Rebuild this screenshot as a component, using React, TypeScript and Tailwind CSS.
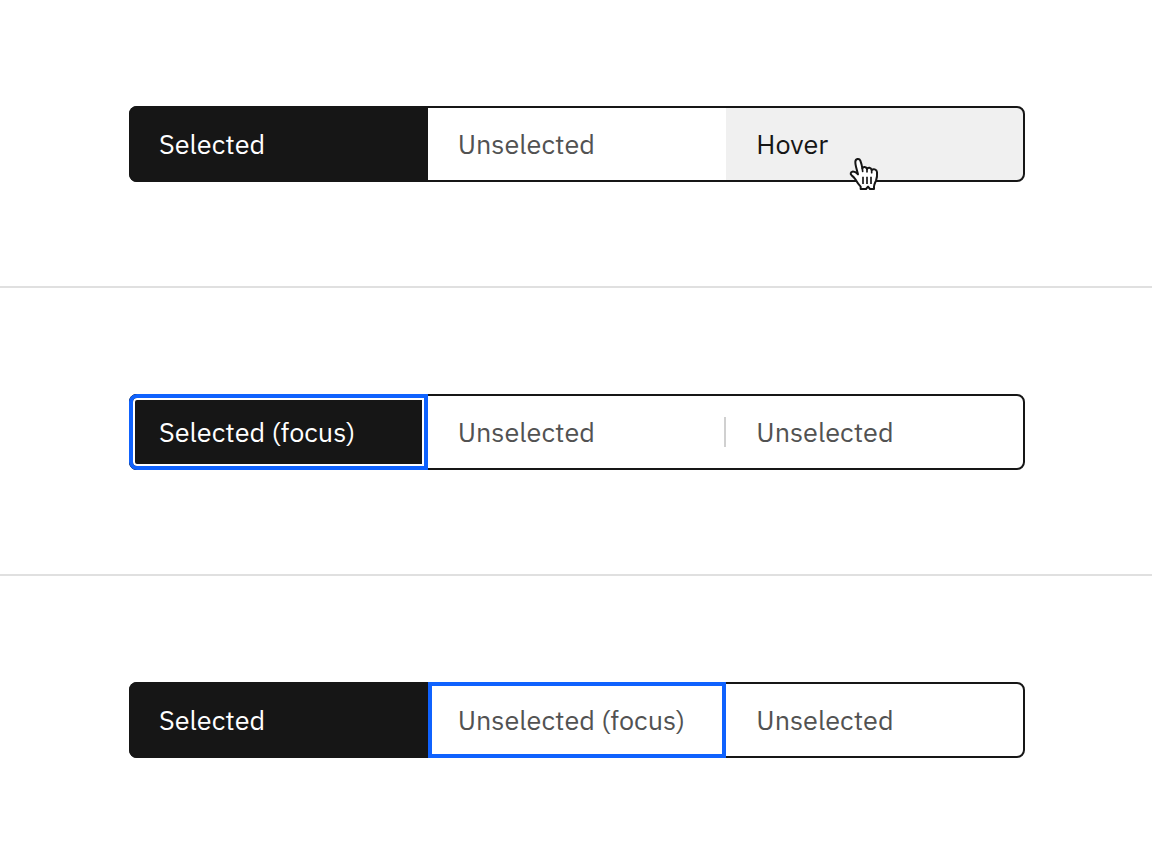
import clsx from 'clsx'

type SegmentState = 'selected' | 'unselected' | 'hover'

interface Segment {
  label: string
  state: SegmentState
  focused?: boolean
  divider?: boolean
}

const switchers: Segment[][] = [
  [
    { label: 'Selected', state: 'selected' },
    { label: 'Unselected', state: 'unselected' },
    { label: 'Hover', state: 'hover' }
  ],
  [
    { label: 'Selected (focus)', state: 'selected', focused: true },
    { label: 'Unselected', state: 'unselected', divider: true },
    { label: 'Unselected', state: 'unselected' }
  ],
  [
    { label: 'Selected', state: 'selected' },
    { label: 'Unselected (focus)', state: 'unselected', focused: true },
    { label: 'Unselected', state: 'unselected' }
  ]
]

const HandCursor = () => (
  <svg
    className="absolute top-12 left-[120px] z-20 h-10 w-9"
    viewBox="0 0 108 120"
    fill="none"
    stroke="#161616"
    strokeWidth="6"
    strokeLinecap="round"
    strokeLinejoin="round"
    aria-hidden="true"
  >
    <path
      fill="#fff"
      d="M44 105V98C37 91 32 83 28 76C25 71 21 67 17 64C12 60 14 54 19 53C25 52 30 55 36 61L30 38C28 31 28 28 28 24C28 13 40 12 43 20C46 28 48 36 49 43C51 37 61 37 63 45C66 39 75 40 77 48C82 43 92 46 93 54C94 64 93 72 90 80C87 87 84 91 84 98V105H72L66 98L60 105Z"
    />
    <path strokeWidth="5" strokeLinecap="butt" d="M51 68V90M63 68V90M75 68V90" />
    <path strokeWidth="5" d="M49 43L50 52M63 45V54M77 48V56" />
  </svg>
)

const SwitcherButton = ({ label, state, focused, divider }: Segment) => (
  <button
    type="button"
    role="tab"
    aria-selected={state === 'selected'}
    className={clsx(
      'relative flex h-[76px] items-center px-[30px] text-left text-[27px] leading-9 whitespace-nowrap',
      state === 'selected' && 'bg-[#161616] text-white',
      state === 'unselected' && 'bg-white text-[#525252]',
      state === 'hover' && 'bg-[#f0f0f0] text-[#161616]',
      'first:rounded-l-lg last:rounded-r-lg'
    )}
  >
    {label}
    {divider && <span className="absolute top-[23px] right-0 h-[30px] w-0.5 bg-[#d0d0d0]" />}
    {/* Focus ring covers the outline of the whole switcher */}
    {focused && (
      <span
        className={clsx(
          'absolute inset-0 z-10 border-4 border-[#0f62fe]',
          state === 'selected' && 'rounded-l-lg inset-shadow-[0_0_0_2px_#ffffff]'
        )}
      />
    )}
    {state === 'hover' && <HandCursor />}
  </button>
)

const ContentSwitcher = ({ segments }: { segments: Segment[] }) => (
  <div
    role="tablist"
    className="relative grid grid-cols-3 after:pointer-events-none after:absolute after:inset-0 after:rounded-lg after:border-2 after:border-[#161616]"
  >
    {segments.map((segment, idx) => (
      <SwitcherButton key={idx} {...segment} />
    ))}
  </div>
)

const App = () => {
  return (
    <main className="min-h-screen bg-white font-['IBM_Plex_Sans',Roboto,sans-serif]">
      {switchers.map((segments, idx) => (
        <section
          key={idx}
          className="border-b-2 border-[#e0e0e0] pt-[106px] pr-[127px] pb-[104px] pl-[129px] last:border-b-0"
        >
          <ContentSwitcher segments={segments} />
        </section>
      ))}
    </main>
  )
}

export default App
